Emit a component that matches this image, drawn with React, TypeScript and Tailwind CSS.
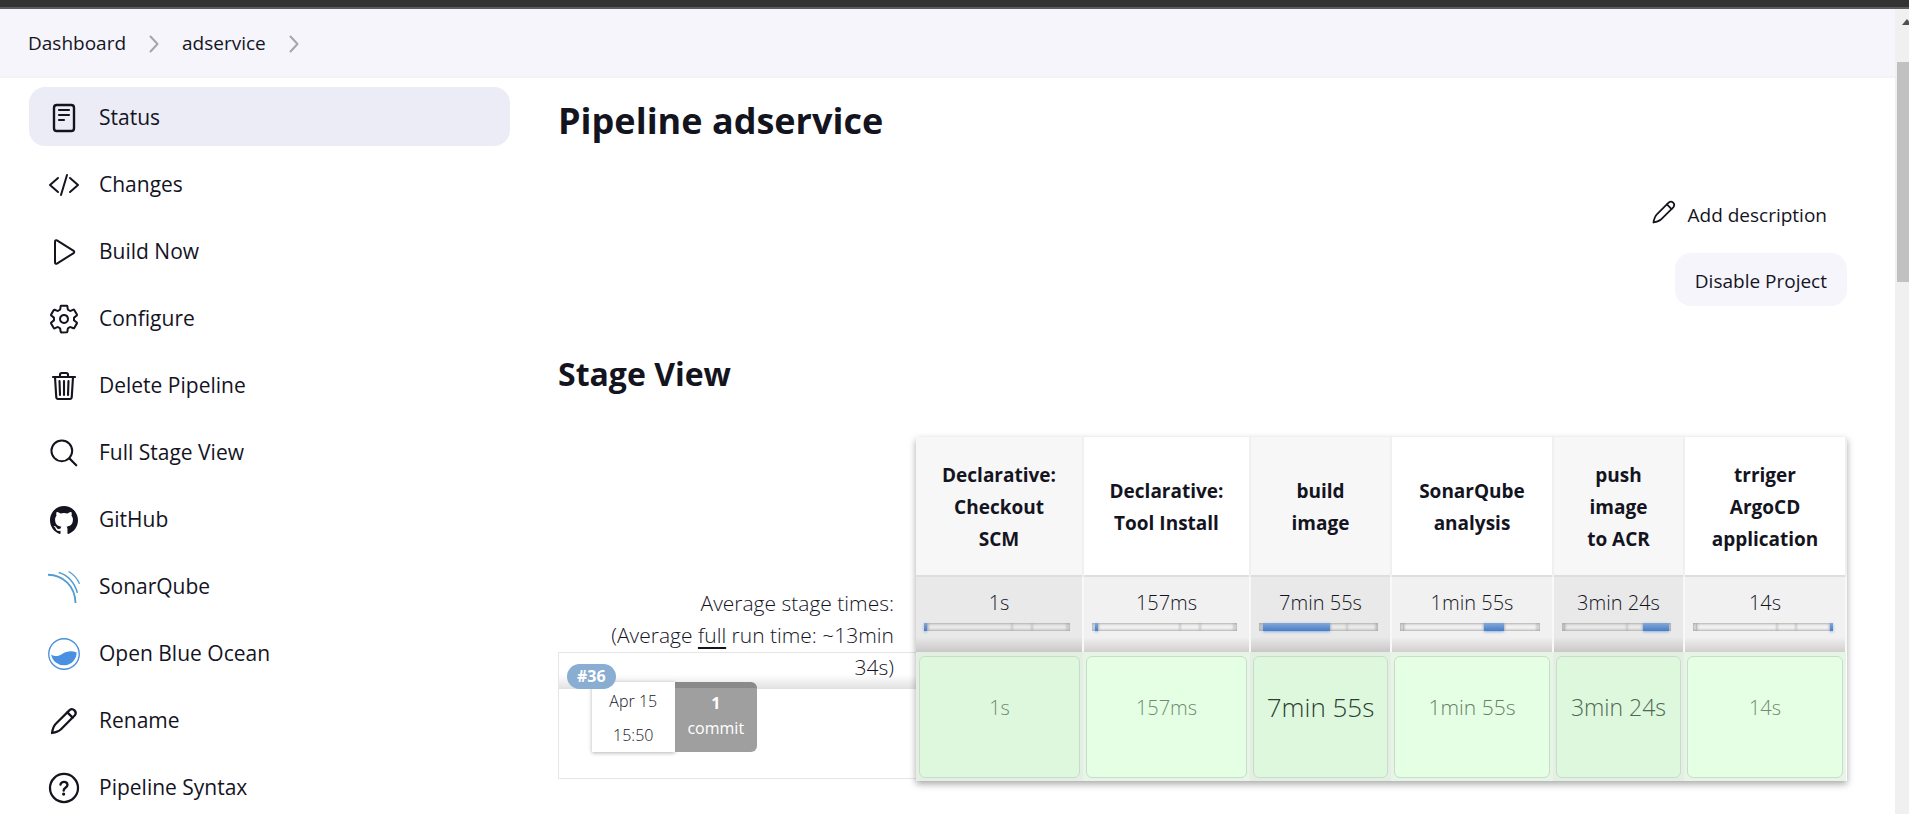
import React from "react";

type Item = { label: string; icon: React.ReactNode; active?: boolean };

const stroke = {
  fill: "none",
  stroke: "currentColor",
  strokeLinecap: "round" as const,
  strokeLinejoin: "round" as const,
};

function Icon({ children, className = "size-8" }: { children: React.ReactNode; className?: string }) {
  return (
    <svg viewBox="0 0 512 512" className={className} aria-hidden="true">
      {children}
    </svg>
  );
}

function Pencil({ className, width = 32 }: { className?: string; width?: number }) {
  return (
    <Icon className={className}>
      <g {...stroke} strokeWidth={width}>
        <path d="M64 448 C72 400 84 340 125 300 L345 82 A60 60 0 0 1 430 165 L208 388 C172 424 112 440 64 448z" />
        <path d="M310 118 L394 202" />
      </g>
    </Icon>
  );
}

const items: Item[] = [
  {
    label: "Status",
    active: true,
    icon: (
      <Icon>
        <rect x="96" y="48" width="320" height="416" rx="44" {...stroke} strokeWidth="38" />
        <path d="M176 128h160M176 208h160M176 288h80" {...stroke} strokeWidth="34" />
      </Icon>
    ),
  },
  {
    label: "Changes",
    icon: (
      <Icon>
        <path d="M160 368L32 256l128-112M352 368l128-112-128-112M304 96l-96 320" {...stroke} strokeWidth="32" />
      </Icon>
    ),
  },
  {
    label: "Build Now",
    icon: (
      <Icon>
        <path
          d="M112 90v332c0 17.440 17 28.520 31 20.160l268-169.370c12.120-7.250 12.120-26.330 0-33.580L143 69.840c-14-8.360-31 2.720-31 20.160z"
          {...stroke}
          strokeWidth="32"
        />
      </Icon>
    ),
  },
  {
    label: "Configure",
    icon: (
      <Icon>
        <path
          d="M262.290 192.310a64 64 0 1057.400 57.400 64.130 64.130 0 00-57.400-57.400zM416.390 256a154.340 154.340 0 01-1.530 20.790l45.210 35.460a10.810 10.810 0 012.450 13.750l-42.770 74a10.810 10.810 0 01-13.140 4.590l-44.900-18.080a16.110 16.110 0 00-15.170 1.750A164.480 164.480 0 01325 400.800a15.940 15.940 0 00-8.820 12.140l-6.730 47.890a11.080 11.080 0 01-10.680 9.170h-85.540a11.110 11.110 0 01-10.690-8.870l-6.720-47.820a16.070 16.070 0 00-9-12.220 155.300 155.300 0 01-21.460-12.570 16 16 0 00-15.110-1.710l-44.890 18.070a10.810 10.810 0 01-13.140-4.580l-42.770-74a10.800 10.800 0 012.450-13.750l38.210-30a16.050 16.050 0 006-14.080c-.36-4.170-.58-8.330-.58-12.500s.21-8.270.58-12.350a16 16 0 00-6.070-13.940l-38.190-30A10.810 10.810 0 0149.480 186l42.770-74a10.810 10.810 0 0113.140-4.590l44.900 18.080a16.110 16.110 0 0015.170-1.750A164.480 164.480 0 01187 111.200a15.940 15.940 0 008.820-12.140l6.730-47.890A11.080 11.080 0 01213.230 42h85.540a11.110 11.110 0 0110.690 8.870l6.720 47.820a16.070 16.070 0 009 12.220 155.300 155.300 0 0121.460 12.570 16 16 0 0015.110 1.710l44.890-18.070a10.810 10.810 0 0113.140 4.580l42.770 74a10.800 10.800 0 01-2.450 13.750l-38.210 30a16.050 16.050 0 00-6.050 14.080c.33 4.140.55 8.300.55 12.470z"
          {...stroke}
          strokeWidth="32"
        />
      </Icon>
    ),
  },
  {
    label: "Delete Pipeline",
    icon: (
      <Icon>
        <path d="M112 112l20 320c.950 18.490 14.400 32 32 32h184c17.670 0 30.870-13.510 32-32l20-320" {...stroke} strokeWidth="34" />
        <path d="M80 112h352" {...stroke} strokeWidth="34" />
        <path
          d="M192 112V72a23.930 23.930 0 0124-24h80a23.930 23.930 0 0124 24v40M256 176v224M184 176l8 224M328 176l-8 224"
          {...stroke}
          strokeWidth="34"
        />
      </Icon>
    ),
  },
  {
    label: "Full Stage View",
    icon: (
      <Icon>
        <circle cx="221" cy="221" r="166" {...stroke} strokeWidth="32" />
        <path d="M342 342L452 452" {...stroke} strokeWidth="34" />
      </Icon>
    ),
  },
  {
    label: "GitHub",
    icon: (
      <Icon>
        <path
          fill="currentColor"
          d="M256 32C132.300 32 32 134.900 32 261.700c0 101.500 64.200 187.500 153.200 217.900a17.560 17.560 0 003.800.4c8.300 0 11.500-6.100 11.500-11.400 0-5.500-.2-19.900-.3-39.100a102.400 102.400 0 01-22.600 2.700c-43.100 0-52.900-33.500-52.900-33.500-10.200-26.500-24.900-33.600-24.900-33.600-19.500-13.700-.1-14.100 1.400-14.100h.1c22.500 2 34.300 23.800 34.300 23.800 11.200 19.600 26.200 25.100 39.600 25.100a63 63 0 0025.600-6c2-14.800 7.800-24.900 14.200-30.700-49.700-5.800-102-25.500-102-113.500 0-25.100 8.700-45.600 23-61.600-2.300-5.800-10-29.200 2.200-60.800a18.640 18.640 0 015-.5c8.100 0 26.400 3.100 56.600 24.100a208.210 208.210 0 01112.200 0c30.200-21 48.500-24.100 56.600-24.100a18.640 18.640 0 015 .5c12.200 31.600 4.500 55 2.200 60.800 14.300 16.100 23 36.600 23 61.600 0 88.200-52.400 107.600-102.300 113.300 8 7.100 15.200 21.100 15.200 42.500 0 30.700-.3 55.500-.3 63 0 5.400 3.100 11.500 11.400 11.500a19.350 19.350 0 004-.4C415.900 449.200 480 363.100 480 261.700 480 134.900 379.700 32 256 32z"
        />
      </Icon>
    ),
  },
  {
    label: "SonarQube",
    icon: (
      <Icon>
        <g fill="none" stroke="#549dd0">
          <path d="M0 60 C240 64 436 240 440 512" strokeWidth="30" />
          <path d="M172 24 C310 60 430 190 470 350" strokeWidth="25" />
          <path d="M330 8 C410 54 470 120 504 206" strokeWidth="20" />
        </g>
      </Icon>
    ),
  },
  {
    label: "Open Blue Ocean",
    icon: (
      <Icon>
        <circle cx="256" cy="256" r="244" fill="#fff" stroke="#4a90e2" strokeWidth="22" />
        <path d="M52 262 C110 300 160 296 226 254 C290 212 380 200 458 232 A204 204 0 0 1 52 262z" fill="#4a90e2" />
      </Icon>
    ),
  },
  { label: "Rename", icon: <Pencil className="size-8" width={36} /> },
  {
    label: "Pipeline Syntax",
    icon: (
      <Icon>
        <circle cx="256" cy="256" r="224" {...stroke} strokeWidth="36" />
        <path
          d="M200 202.290s.840-17.500 19.570-32.570C230.680 160.770 244 158.180 256 158c10.930-.140 20.690 1.670 26.530 4.450 10 4.760 29.470 16.380 29.470 41.090 0 26-17 37.810-36.370 50.800S251 281.430 251 296"
          {...stroke}
          strokeWidth="38"
        />
        <circle cx="250" cy="352" r="26" fill="currentColor" />
      </Icon>
    ),
  },
];

const shares = [2, 1, 57, 14, 24, 2];

const stages = [
  { name: "Declarative: Checkout SCM", avg: "1s", run: "1s", col: "w-[167px]", text: "text-xl text-[#6f8a70]" },
  { name: "Declarative: Tool Install", avg: "157ms", run: "157ms", col: "w-[167px]", text: "text-xl text-[#6f8a70]" },
  { name: "build image", avg: "7min 55s", run: "7min 55s", col: "w-[141px]", text: "text-[26px] text-[#2c3e32]" },
  { name: "SonarQube analysis", avg: "1min 55s", run: "1min 55s", col: "w-[162px]", text: "text-[21px] text-[#65806a]" },
  { name: "push image to\u00a0ACR", avg: "3min 24s", run: "3min 24s", col: "w-[131px]", text: "text-[23px] text-[#4f6853]" },
  { name: "trriger ArgoCD application", avg: "14s", run: "14s", col: "w-[162px]", text: "text-xl text-[#6f8a70]" },
];

function StageBar({ active }: { active: number }) {
  return (
    <div className="mr-1 flex h-2 shadow-[inset_0_0_3px_#999]">
      {shares.map((share, i) => (
        <span
          key={i}
          style={{ width: `${share}%` }}
          className={
            i === active
              ? "min-w-[3px] bg-linear-to-b from-[#83a9d4] to-[#4a7cc8] shadow-[0_1px_3px_#8fb0de]"
              : "shadow-[inset_0_0_3px_#a8a8a8]"
          }
        />
      ))}
    </div>
  );
}

function Chevron() {
  return (
    <svg viewBox="0 0 10 18" className="h-[18px] w-[10px]" aria-hidden="true">
      <path d="M1.500 1.500L8.500 9l-7 7.500" fill="none" stroke="#a5a5b0" strokeWidth="2" strokeLinecap="round" strokeLinejoin="round" />
    </svg>
  );
}

export default function App() {
  return (
    <div className="flex h-screen flex-col overflow-hidden bg-white font-['Open_Sans','Noto_Sans',sans-serif] text-[#14141f]">
      <div className="h-[9px] shrink-0 border-b-2 border-[#5c5c60] bg-[#333]" />
      <div className="flex min-h-0 flex-1">
        <div className="min-w-0 flex-1 overflow-hidden">
          <nav aria-label="Breadcrumb" className="flex h-[69px] items-center gap-[23px] border-b-2 border-[#f3f3f6] bg-[#f5f5fb] px-7 pt-[2px] text-[19px]">
            <a href="#dashboard">Dashboard</a>
            <Chevron />
            <a href="#adservice">adservice</a>
            <Chevron />
          </nav>
          <div className="flex gap-12 pt-[9px] pr-12 pl-[29px]">
            <aside className="w-[481px] shrink-0">
              <ul className="flex flex-col gap-2">
                {items.map((item) => (
                  <li key={item.label}>
                    <a
                      href="#task"
                      aria-current={item.active ? "page" : undefined}
                      className={
                        item.active
                          ? "flex h-[59px] items-center gap-[19px] rounded-2xl bg-[#ececf6] pt-[2px] pl-[19px] text-[21px]"
                          : "flex h-[59px] items-center gap-[19px] rounded-2xl pt-[2px] pl-[19px] text-[21px]"
                      }
                    >
                      {item.icon}
                      {item.label}
                    </a>
                  </li>
                ))}
              </ul>
            </aside>
            <main className="min-w-0 flex-1 pt-[9px]">
              <h1 className="text-4xl leading-[50px] font-bold">Pipeline adservice</h1>
              <div className="flex flex-col items-end gap-3 pt-[41px] text-[19px]">
                <a href="#description" className="flex h-[54px] items-center gap-[10px] pt-[3px] pr-5">
                  <Pencil className="mb-2 size-7" width={32} />
                  Add description
                </a>
                <button type="button" className="h-[53px] rounded-2xl bg-[#f5f5fb] px-5 pt-[3px]">
                  Disable Project
                </button>
              </div>
              <h2 className="pt-[44px] text-[32px] leading-[48px] font-bold">Stage View</h2>
              <div className="flex pt-[39px]">
                <div className="min-w-0 flex-1 pt-[140px]">
                  <div className="h-[75px] pt-[10px] pr-[22px] pl-8 text-right text-[21px] leading-8 font-light">
                    Average stage times:
                    <br />
                    (Average <span className="underline decoration-2 underline-offset-4">full</span> run time: ~13min 34s)
                  </div>
                  <div className="h-[127px] border border-r-0 border-[#e6e6e6]">
                    <div className="h-9 bg-linear-to-b from-transparent from-60% to-black/12" />
                    <div className="relative -mt-[7px] ml-[33px] flex h-[70px] w-[165px] text-center text-base">
                      <span className="absolute -top-[18px] -left-[25px] rounded-full bg-[#8aadd2] px-[10px] text-base leading-[25px] font-bold text-white">
                        #36
                      </span>
                      <div className="flex-1 bg-white pt-[2px] leading-[34px] font-light shadow-[0_1px_4px_rgba(0,0,0,0.3)]">
                        Apr 15
                        <br />
                        15:50
                      </div>
                      <a href="#commit" className="flex-1 rounded-r-md border-t-[6px] border-[#8a8a8a] bg-[#9f9f9f] pt-[3px] leading-[25px] text-white">
                        <b>1</b>
                        <br />
                        commit
                      </a>
                    </div>
                  </div>
                </div>
                <table className="table-fixed border-collapse shadow-[0_3px_7px_rgba(0,0,0,0.35)]">
                  <thead>
                    <tr className="h-[139px]">
                      {stages.map((s, i) => (
                        <th
                          key={s.name}
                          scope="col"
                          className={`${s.col} border-r-2 border-[#f0f0f0] px-[22px] pt-[2px] text-[19px] leading-8 font-bold ${i % 2 ? "bg-white" : "bg-[#f7f7f7]"}`}
                        >
                          {s.name}
                        </th>
                      ))}
                    </tr>
                  </thead>
                  <tbody>
                    <tr className="h-[76px]">
                      {stages.map((s, i) => (
                        <td
                          key={s.name}
                          className={`border-t-2 border-r-2 border-t-[#dedede] border-r-[#f8f8f8] bg-linear-to-b from-80% px-2 text-center align-top ${i % 2 ? "from-[#f1f1f1] to-[#d2cfcf]" : "from-[#e9e9e9] to-[#cac7c7]"}`}
                        >
                          <div className="pt-[10px] pb-1 text-xl leading-8 font-light">{s.avg}</div>
                          <StageBar active={i} />
                        </td>
                      ))}
                    </tr>
                    <tr className="h-[129px]">
                      {stages.map((s, i) => (
                        <td key={s.name} className={`p-[3px] ${i % 2 ? "bg-[#e6f5e6]" : "bg-[#e2efe2]"}`}>
                          <div
                            className={`flex h-[122px] items-center justify-center rounded-md border border-[#c9dcc9] pb-[18px] font-light whitespace-nowrap ${s.text} ${i % 2 ? "bg-[#e4ffe4]" : "bg-[#def8de]"}`}
                          >
                            {s.run}
                          </div>
                        </td>
                      ))}
                    </tr>
                  </tbody>
                </table>
              </div>
            </main>
          </div>
        </div>
        <div className="flex w-[14px] shrink-0 flex-col items-end bg-[#f0f0f0]" aria-hidden="true">
          <svg viewBox="0 0 7 6" className="mt-[10px] h-[6px] w-[7px]">
            <path d="M0 6L5 0l2 2.400V6z" fill="#505050" />
          </svg>
          <div className="mt-[37px] h-[220px] w-3 bg-[#c1c1c1]" />
        </div>
      </div>
    </div>
  );
}
